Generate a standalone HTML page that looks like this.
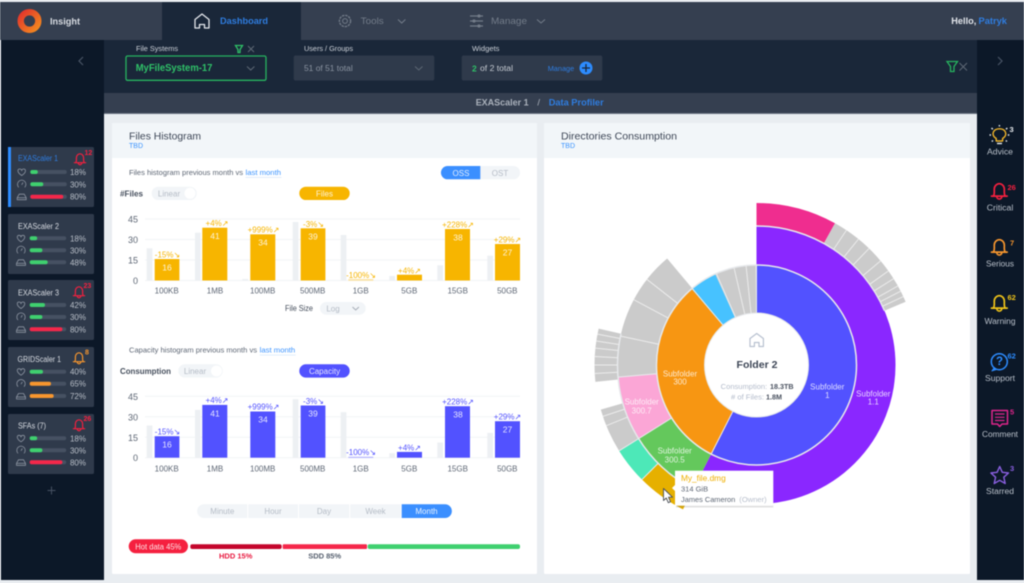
<!DOCTYPE html>
<html><head><meta charset="utf-8"><title>Insight Dashboard</title>
<style>
html,body{margin:0;padding:0;width:1024px;height:583px;overflow:hidden;background:#e9edf1}
svg{display:block;filter:blur(.55px)}
text{font-family:"Liberation Sans","DejaVu Sans",sans-serif;dominant-baseline:central;transform:translateY(.5px)}
.m{text-anchor:middle}.e{text-anchor:end}.b{font-weight:700}
.yl{font-size:9px;fill:#5d6674;text-anchor:end}
.xl{font-size:8px;fill:#5d6674;text-anchor:middle}
.gr{stroke:#f2f4f6;stroke-width:1}
.gb{fill:#edf0f3}
.v{font-size:8.5px;fill:#fff;fill-opacity:.85;text-anchor:middle}
.dy{font-size:8px;fill:#f7b500;text-anchor:middle}
.dp{font-size:8px;fill:#5252ff;text-anchor:middle}
.by{fill:#f7b500}.bp{fill:#5252ff}
.ct{font-size:8px;fill:#d8dce2}
.pc{font-size:8px;fill:#b9bfc8;text-anchor:end}
.tr{fill:#465162}.gn{fill:#3fd06f}.rd{fill:#f5274a}.or{fill:#f7962e}
.ri{fill:none;stroke:#8d95a2;stroke-width:.8}
.sl{font-size:8px;fill:#b9c0ca;text-anchor:middle}
.sf{font-size:8px;fill:#fff;fill-opacity:.8;text-anchor:middle}
.sep{stroke:#ececec;stroke-width:1}
.seg{font-size:8px;fill:#b5bcc6;text-anchor:middle}
</style></head>
<body>
<svg width="1024" height="583" viewBox="0 0 1024 583" xmlns="http://www.w3.org/2000/svg">
<defs>
<g id="bell" fill="none" stroke-width="1.5" stroke-linejoin="round" stroke-linecap="round">
<path d="M-5 4C-4.2 2.5-4.5 .5-4.5-1.5A4.5 5 0 0 1 4.5-1.5C4.5 .5 4.2 2.5 5 4"/>
<path d="M-7 4.6H7"/><path d="M-2.2 5A2.2 2.2 0 0 0 2.2 5"/></g>
<path id="heart" class="ri" d="M0 3.5C-5 .2-4.3-3-2-3-1-3-.2-2.2 0-1.6.2-2.2 1-3 2-3 4.3-3 5 .2 0 3.5Z"/>
<g id="gauge" class="ri"><path d="M-3 3A4.2 4.2 0 1 1 3 3"/><path d="M0 .5L1.3-1.8"/></g>
<g id="drive" class="ri"><path d="M-4.5 3H4.5V1L2.5-2.5H-2.5L-4.5 1Z"/><path d="M-4.5 1H4.5"/></g>
<path id="hs" d="M-7 7V-1.5L0-7 7-1.5V7H2.5V3.5H-2.5V7Z" fill="none" stroke-width="1.3" stroke-linejoin="round"/>
<linearGradient id="lg" x1="0" y1="0" x2="1" y2="1"><stop offset="0" stop-color="#e2352c"/><stop offset="1" stop-color="#f38a1f"/></linearGradient>
</defs>

<!-- shell -->
<rect width="1024" height="583" fill="#e9edf1"/>
<rect x="0" y="2" width="1024" height="38" fill="#353f50"/>
<rect x="162" y="2" width="139" height="38" fill="#1a2739"/>
<rect x="1" y="40" width="103" height="540" fill="#0c1828"/>
<rect x="104" y="40" width="873" height="53" fill="#1a2739"/>
<rect x="104" y="93" width="873" height="20" fill="#353f50"/>
<rect x="104" y="113" width="873" height="1" fill="#6b7482"/>
<rect x="977" y="40" width="47" height="540" fill="#0c1828"/>

<!-- top bar -->
<circle cx="29.5" cy="21" r="8.8" fill="none" stroke="url(#lg)" stroke-width="6.4"/>
<text x="50" y="21" font-size="9" class="b" fill="#d9dde3" textLength="30" lengthAdjust="spacingAndGlyphs">Insight</text>
<use href="#hs" x="202" y="21" stroke="#e4e7ec"/>
<text x="220" y="21" font-size="9.5" class="b" fill="#2f7de0" textLength="48" lengthAdjust="spacingAndGlyphs">Dashboard</text>
<g fill="none" stroke="#737c89" stroke-width="1"><circle cx="345" cy="21" r="2.4"/><circle cx="345" cy="21" r="5.6" stroke-width="1.3" stroke-dasharray="2.4 .9"/>
<path d="M398 19.5L401.7 23 405.4 19.5"/><path d="M537 19.5L541 23 545 19.5"/>
<path stroke-width="1.2" d="M470 16H483M470 21H483M470 26H483"/></g>
<g fill="#737c89"><circle cx="479" cy="16" r="1.6"/><circle cx="474" cy="21" r="1.6"/><circle cx="479" cy="26" r="1.6"/></g>
<text x="360.7" y="21" font-size="9.5" fill="#737c89" textLength="23" lengthAdjust="spacingAndGlyphs">Tools</text>
<text x="491" y="21" font-size="9.5" fill="#737c89" textLength="36" lengthAdjust="spacingAndGlyphs">Manage</text>
<text x="951.3" y="21" font-size="9.5" class="b" fill="#e4e7ec" textLength="25" lengthAdjust="spacingAndGlyphs">Hello,</text>
<text x="978.5" y="21" font-size="9.5" class="b" fill="#2f7de0" textLength="28.5" lengthAdjust="spacingAndGlyphs">Patryk</text>

<!-- filter bar -->
<path d="M83 57L79 61 83 65" fill="none" stroke="#4a5566" stroke-width="1.2"/>
<path d="M998 57L1002 61 998 65" fill="none" stroke="#4a5566" stroke-width="1.2"/>
<text x="136" y="49" font-size="7" fill="#ccd1d8" textLength="42" lengthAdjust="spacingAndGlyphs">File Systems</text>
<path d="M235.5 45.500H242.500L240 49.500V52.500H238V49.500Z" fill="none" stroke="#2fc168" stroke-width="1.300"/>
<path d="M248 46L254 52M254 46L248 52" stroke="#5e6875" stroke-width="1"/>
<rect x="126" y="56" width="140" height="24.300" rx="1.500" fill="#1a2739" stroke="#27b35f" stroke-width="1.300"/>
<text x="135.700" y="68" font-size="10" class="b" fill="#2fc168" textLength="76.700" lengthAdjust="spacingAndGlyphs">MyFileSystem-17</text>
<path d="M247 66.500L250.700 70 254.400 66.500" fill="none" stroke="#5e6875" stroke-width="1"/>
<text x="304" y="49" font-size="7" fill="#ccd1d8" textLength="49" lengthAdjust="spacingAndGlyphs">Users / Groups</text>
<rect x="293.700" y="55.500" width="140.600" height="25" rx="2" fill="#2f3a4b"/>
<text x="304" y="68" font-size="8" fill="#8a93a0" textLength="48.700" lengthAdjust="spacingAndGlyphs">51 of 51 total</text>
<path d="M415 66.500L418.800 70 422.500 66.500" fill="none" stroke="#5e6875" stroke-width="1"/>
<text x="472" y="49" font-size="7" fill="#ccd1d8" textLength="27.500" lengthAdjust="spacingAndGlyphs">Widgets</text>
<rect x="461.700" y="55.500" width="140.600" height="25" rx="2" fill="#2f3a4b"/>
<text x="472" y="68" font-size="8.500" class="b" fill="#2fc168">2</text>
<text x="480" y="68" font-size="8" fill="#c5cad1" textLength="33" lengthAdjust="spacingAndGlyphs">of 2 total</text>
<text x="547.700" y="68" font-size="7.500" fill="#2f7de0" textLength="26.500" lengthAdjust="spacingAndGlyphs">Manage</text>
<circle cx="586" cy="68" r="6.500" fill="#2d8cff"/>
<path d="M582 68H590M586 64V72" stroke="#1a2739" stroke-width="1.300"/>
<path d="M947 61.500H957.500L954 66.500V71.500H950.500V66.500Z" fill="none" stroke="#27b35f" stroke-width="1.300"/>
<path d="M959.500 63L967 70.500M967 63L959.500 70.500" stroke="#5e6875" stroke-width="1"/>

<!-- breadcrumb -->
<text x="475.700" y="102.500" font-size="9.500" class="b" fill="#aab1bb" textLength="53" lengthAdjust="spacingAndGlyphs">EXAScaler 1</text>
<text x="538.700" y="102.500" font-size="9.500" fill="#aab1bb" class="m">/</text>
<text x="548.700" y="102.500" font-size="9.500" class="b" fill="#2f7de0" textLength="55" lengthAdjust="spacingAndGlyphs">Data Profiler</text>

<!-- left sidebar cards -->
<rect x="8" y="147" width="86" height="60" rx="1.500" fill="#2f3a4b"/><rect x="8" y="147" width="3" height="60" fill="#2d8cff"/>
<rect x="8" y="214" width="86" height="60" rx="1.500" fill="#2f3a4b"/>
<rect x="8" y="280" width="86" height="60" rx="1.500" fill="#2f3a4b"/>
<rect x="8" y="347" width="86" height="60" rx="1.500" fill="#2f3a4b"/>
<rect x="8" y="414" width="86" height="60" rx="1.500" fill="#2f3a4b"/>

<text x="18" y="158" class="ct" style="fill:#2f7de0" textLength="40" lengthAdjust="spacingAndGlyphs">EXAScaler 1</text>
<use href="#bell" transform="translate(80 159) scale(.8)" stroke="#f5203f"/>
<text x="84.500" y="153" font-size="7" class="b" fill="#f5203f">12</text>
<use href="#heart" x="21.700" y="172"/><use href="#gauge" x="21.700" y="184.300"/><use href="#drive" x="21.700" y="196.700"/>
<rect x="30.300" y="170" width="36.500" height="4" rx="2" class="tr"/><rect x="30.300" y="170" width="7.500" height="4" rx="2" class="gn"/><text x="86" y="172" class="pc">18%</text>
<rect x="30.300" y="182.300" width="36.500" height="4" rx="2" class="tr"/><rect x="30.300" y="182.300" width="13" height="4" rx="2" class="gn"/><text x="86" y="184.300" class="pc">30%</text>
<rect x="30.300" y="194.700" width="36.500" height="4" rx="2" class="tr"/><rect x="30.300" y="194.700" width="33" height="4" rx="2" class="rd"/><text x="86" y="196.700" class="pc">80%</text>

<text x="18" y="226" class="ct" textLength="41" lengthAdjust="spacingAndGlyphs">EXAScaler 2</text>
<use href="#heart" x="21" y="238.300"/><use href="#gauge" x="21" y="250.300"/><use href="#drive" x="21" y="262.300"/>
<rect x="29.700" y="236.300" width="36.500" height="4" rx="2" class="tr"/><rect x="29.700" y="236.300" width="7.500" height="4" rx="2" class="gn"/><text x="86" y="238.300" class="pc">18%</text>
<rect x="29.700" y="248.300" width="36.500" height="4" rx="2" class="tr"/><rect x="29.700" y="248.300" width="12.700" height="4" rx="2" class="gn"/><text x="86" y="250.300" class="pc">30%</text>
<rect x="29.700" y="260.300" width="36.500" height="4" rx="2" class="tr"/><rect x="29.700" y="260.300" width="18" height="4" rx="2" class="gn"/><text x="86" y="262.300" class="pc">48%</text>

<text x="18" y="292.300" class="ct" textLength="41" lengthAdjust="spacingAndGlyphs">EXAScaler 3</text>
<use href="#bell" transform="translate(79 292) scale(.8)" stroke="#f5203f"/>
<text x="83.500" y="286" font-size="7" class="b" fill="#f5203f">23</text>
<use href="#heart" x="21" y="305"/><use href="#gauge" x="21" y="317"/><use href="#drive" x="21" y="329.300"/>
<rect x="29.700" y="303" width="36.500" height="4" rx="2" class="tr"/><rect x="29.700" y="303" width="15.300" height="4" rx="2" class="gn"/><text x="86" y="305" class="pc">42%</text>
<rect x="29.700" y="315" width="36.500" height="4" rx="2" class="tr"/><rect x="29.700" y="315" width="12.700" height="4" rx="2" class="gn"/><text x="86" y="317" class="pc">30%</text>
<rect x="29.700" y="327.300" width="36.500" height="4" rx="2" class="tr"/><rect x="29.700" y="327.300" width="32.700" height="4" rx="2" class="rd"/><text x="86" y="329.300" class="pc">80%</text>

<text x="17.500" y="359" class="ct" textLength="43.500" lengthAdjust="spacingAndGlyphs">GRIDScaler 1</text>
<use href="#bell" transform="translate(79 358) scale(.8)" stroke="#f7962e"/>
<text x="85" y="352.500" font-size="7" class="b" fill="#f7962e">8</text>
<use href="#heart" x="21" y="371.700"/><use href="#gauge" x="21" y="383.700"/><use href="#drive" x="21" y="396"/>
<rect x="29.700" y="369.700" width="36.500" height="4" rx="2" class="tr"/><rect x="29.700" y="369.700" width="13.300" height="4" rx="2" class="gn"/><text x="86" y="371.700" class="pc">40%</text>
<rect x="29.700" y="381.700" width="36.500" height="4" rx="2" class="tr"/><rect x="29.700" y="381.700" width="21.300" height="4" rx="2" class="or"/><text x="86" y="383.700" class="pc">65%</text>
<rect x="29.700" y="394" width="36.500" height="4" rx="2" class="tr"/><rect x="29.700" y="394" width="24" height="4" rx="2" class="or"/><text x="86" y="396" class="pc">72%</text>

<text x="18" y="425.700" class="ct" textLength="28" lengthAdjust="spacingAndGlyphs">SFAs (7)</text>
<use href="#bell" transform="translate(79 425) scale(.8)" stroke="#f5203f"/>
<text x="83.500" y="419" font-size="7" class="b" fill="#f5203f">26</text>
<use href="#heart" x="21" y="438.300"/><use href="#gauge" x="21" y="450.300"/><use href="#drive" x="21" y="462.300"/>
<rect x="29.700" y="436.300" width="36.500" height="4" rx="2" class="tr"/><rect x="29.700" y="436.300" width="7.500" height="4" rx="2" class="gn"/><text x="86" y="438.300" class="pc">18%</text>
<rect x="29.700" y="448.300" width="36.500" height="4" rx="2" class="tr"/><rect x="29.700" y="448.300" width="12.700" height="4" rx="2" class="gn"/><text x="86" y="450.300" class="pc">30%</text>
<rect x="29.700" y="460.300" width="36.500" height="4" rx="2" class="tr"/><rect x="29.700" y="460.300" width="32.700" height="4" rx="2" class="rd"/><text x="86" y="462.300" class="pc">80%</text>
<path d="M51.500 486.500V494.500M47.500 490.500H55.500" stroke="#465162" stroke-width="1"/>

<!-- panels -->
<rect x="112" y="123" width="425" height="451" rx="1.500" fill="#fff"/>
<rect x="112" y="123" width="425" height="35" fill="#f2f6f9"/>
<rect x="544" y="123" width="426" height="451" rx="1.500" fill="#fff"/>
<rect x="544" y="123" width="426" height="35" fill="#f2f6f9"/>
<text x="129" y="136" font-size="10.500" fill="#3d4656" textLength="72" lengthAdjust="spacingAndGlyphs">Files Histogram</text>
<text x="129" y="146" font-size="7" fill="#3b93ff">TBD</text>
<text x="561" y="136" font-size="10.500" fill="#3d4656" textLength="116" lengthAdjust="spacingAndGlyphs">Directories Consumption</text>
<text x="561" y="146" font-size="7" fill="#3b93ff">TBD</text>

<!-- files histogram -->
<text x="129" y="172" font-size="7.500" fill="#5d6674" textLength="114" lengthAdjust="spacingAndGlyphs">Files histogram previous month vs</text>
<text x="245.500" y="172" font-size="7.500" fill="#3b93ff" textLength="35.500" lengthAdjust="spacingAndGlyphs">last month</text>
<rect x="245.500" y="177" width="36" height=".7" fill="#d5e6fb"/>
<rect x="441" y="166" width="79" height="13.300" rx="6.600" fill="#f2f5f8"/>
<path d="M480.300 166H447.600A6.600 6.600 0 0 0 447.600 179.300H480.300Z" fill="#3b8fff"/>
<text x="461" y="172.800" font-size="8" fill="#fff" fill-opacity=".85" class="m">OSS</text>
<text x="500" y="172.800" font-size="8" fill="#b5bcc6" class="m">OST</text>
<text x="120" y="193.500" font-size="8" class="b" fill="#454e5c" textLength="23" lengthAdjust="spacingAndGlyphs">#Files</text>
<rect x="151.700" y="186.700" width="45" height="13.300" rx="6.600" fill="#f2f5f8"/><circle cx="190" cy="193.300" r="5.500" fill="#fff"/>
<text x="169" y="193.500" font-size="8" fill="#b5bcc6" class="m">Linear</text>
<rect x="299.300" y="186.700" width="50.400" height="13.300" rx="6.600" fill="#f7b500"/>
<text x="324.500" y="193.500" font-size="8" fill="#fff" fill-opacity=".85" class="m">Files</text>

<text x="138" y="219" class="yl">45</text><text x="138" y="239.500" class="yl">30</text><text x="138" y="260" class="yl">15</text><text x="138" y="280.500" class="yl">0</text>
<path class="gr" d="M145 219H520M145 239.500H520M145 260H520M145 280.500H520"/>
<rect class="gb" x="146.700" y="248.300" width="5.700" height="32.200"/><rect class="gb" x="195" y="232.700" width="5.700" height="47.800"/><rect class="gb" x="242.300" y="279" width="5.700" height="1.500"/><rect class="gb" x="292.700" y="222" width="5.700" height="58.500"/><rect class="gb" x="340.700" y="235" width="5.700" height="45.500"/><rect class="gb" x="389.300" y="276" width="5.700" height="4.500"/><rect class="gb" x="437.300" y="265.300" width="5.700" height="15.200"/><rect class="gb" x="487.300" y="255.700" width="5.700" height="24.800"/>
<rect class="by" x="154.700" y="259" width="24.700" height="21.500"/><rect class="by" x="202.300" y="227.700" width="25" height="52.800"/><rect class="by" x="250.300" y="234.300" width="25" height="46.200"/><rect class="by" x="300.700" y="228.300" width="24.700" height="52.200"/><rect x="348.300" y="279" width="25" height="1.800" fill="#fbe3a6"/><rect class="by" x="397" y="274.700" width="25" height="5.800"/><rect class="by" x="445" y="229" width="25" height="51.500"/><rect class="by" x="495" y="244" width="25" height="36.500"/>
<text class="v" x="167" y="267">16</text><text class="v" x="215" y="235.700">41</text><text class="v" x="263" y="242">34</text><text class="v" x="313" y="236">39</text><text class="v" x="458" y="237">38</text><text class="v" x="507.500" y="252">27</text>
<text class="dy" x="167.500" y="254.300">-15%↘</text><text class="dy" x="217" y="223">+4%↗</text><text class="dy" x="263.500" y="229.500">+999%↗</text><text class="dy" x="313.500" y="224">-3%↘</text><text class="dy" x="361" y="275">-100%↘</text><text class="dy" x="409.500" y="270.500">+4%↗</text><text class="dy" x="458" y="224.500">+228%↗</text><text class="dy" x="507.500" y="239.500">+29%↗</text>
<text class="xl" x="166.700" y="290.700">100KB</text><text class="xl" x="215" y="290.700">1MB</text><text class="xl" x="262.700" y="290.700">100MB</text><text class="xl" x="312.700" y="290.700">500MB</text><text class="xl" x="360.700" y="290.700">1GB</text><text class="xl" x="409.300" y="290.700">5GB</text><text class="xl" x="457.700" y="290.700">15GB</text><text class="xl" x="507.300" y="290.700">50GB</text>
<text x="299" y="308" font-size="8" class="m" fill="#454e5c" textLength="28" lengthAdjust="spacingAndGlyphs">File Size</text>
<rect x="320" y="302" width="45.700" height="12.700" rx="6.300" fill="#f2f5f8"/>
<text x="333" y="308.500" font-size="8" fill="#b5bcc6" class="m">Log</text>
<path d="M352.500 307L355.700 310 358.900 307" fill="none" stroke="#a5acb6" stroke-width="1"/>

<!-- capacity histogram -->
<text x="129" y="349.700" font-size="7.500" fill="#5d6674" textLength="128" lengthAdjust="spacingAndGlyphs">Capacity histogram previous month vs</text>
<text x="259.700" y="349.700" font-size="7.500" fill="#3b93ff" textLength="35.500" lengthAdjust="spacingAndGlyphs">last month</text>
<rect x="259.700" y="354.700" width="36" height=".7" fill="#d5e6fb"/>
<text x="120" y="371" font-size="8" class="b" fill="#454e5c" textLength="51" lengthAdjust="spacingAndGlyphs">Consumption</text>
<rect x="178.300" y="364.300" width="44.400" height="13.300" rx="6.600" fill="#f2f5f8"/><circle cx="216.500" cy="371" r="5.500" fill="#fff"/>
<text x="195" y="371" font-size="8" fill="#b5bcc6" class="m">Linear</text>
<rect x="299.300" y="364.300" width="50.400" height="13.300" rx="6.600" fill="#5252ff"/>
<text x="324.500" y="371" font-size="8" fill="#fff" fill-opacity=".85" class="m">Capacity</text>

<text x="138" y="396.300" class="yl">45</text><text x="138" y="416.800" class="yl">30</text><text x="138" y="437.300" class="yl">15</text><text x="138" y="457.700" class="yl">0</text>
<path class="gr" d="M145 396.300H520M145 416.800H520M145 437.300H520M145 457.700H520"/>
<rect class="gb" x="146.700" y="425.500" width="5.700" height="32.200"/><rect class="gb" x="195" y="409.900" width="5.700" height="47.800"/><rect class="gb" x="292.700" y="399.200" width="5.700" height="58.500"/><rect class="gb" x="340.700" y="412.200" width="5.700" height="45.500"/><rect class="gb" x="389.300" y="453.200" width="5.700" height="4.500"/><rect class="gb" x="437.300" y="442.500" width="5.700" height="15.200"/><rect class="gb" x="487.300" y="432.900" width="5.700" height="24.800"/>
<rect class="bp" x="154.700" y="436.200" width="24.700" height="21.500"/><rect class="bp" x="202.300" y="404.900" width="25" height="52.800"/><rect class="bp" x="250.300" y="411.500" width="25" height="46.200"/><rect class="bp" x="300.700" y="405.500" width="24.700" height="52.200"/><rect x="348.300" y="456.700" width="25" height="1.300" fill="#b9b9ff"/><rect class="bp" x="397" y="451.900" width="25" height="5.800"/><rect class="bp" x="445" y="406.200" width="25" height="51.500"/><rect class="bp" x="495" y="421.200" width="25" height="36.500"/>
<text class="v" x="167" y="444.200">16</text><text class="v" x="215" y="412.900">41</text><text class="v" x="263" y="419.200">34</text><text class="v" x="313" y="413.200">39</text><text class="v" x="458" y="414.200">38</text><text class="v" x="507.500" y="429.200">27</text>
<text class="dp" x="167.500" y="431.500">-15%↘</text><text class="dp" x="217" y="400.200">+4%↗</text><text class="dp" x="263.500" y="406.700">+999%↗</text><text class="dp" x="313.500" y="401.200">-3%↘</text><text class="dp" x="361" y="452.200">-100%↘</text><text class="dp" x="409.500" y="447.700">+4%↗</text><text class="dp" x="458" y="401.700">+228%↗</text><text class="dp" x="507.500" y="416.700">+29%↗</text>
<text class="xl" x="166.700" y="468.300">100KB</text><text class="xl" x="215" y="468.300">1MB</text><text class="xl" x="262.700" y="468.300">100MB</text><text class="xl" x="312.700" y="468.300">500MB</text><text class="xl" x="360.700" y="468.300">1GB</text><text class="xl" x="409.300" y="468.300">5GB</text><text class="xl" x="457.700" y="468.300">15GB</text><text class="xl" x="507.300" y="468.300">50GB</text>

<!-- segmented time -->
<path d="M247.300 504.300H204A6.800 6.800 0 0 0 204 518H247.300Z" fill="#f2f5f8"/>
<rect x="248.300" y="504.300" width="49.700" height="13.700" fill="#f2f5f8"/><rect x="299" y="504.300" width="50.300" height="13.700" fill="#f2f5f8"/><rect x="350.300" y="504.300" width="50.400" height="13.700" fill="#f2f5f8"/>
<path d="M401.700 504.300H445A6.800 6.800 0 0 1 445 518H401.700Z" fill="#3b8fff"/>
<text class="seg" x="222.300" y="511">Minute</text><text class="seg" x="273" y="511">Hour</text><text class="seg" x="324" y="511">Day</text><text class="seg" x="375.500" y="511">Week</text><text class="seg" style="fill:#fff;fill-opacity:.9" x="426.500" y="511">Month</text>

<!-- hot data -->
<rect x="128.700" y="539.300" width="59.300" height="14" rx="7" fill="#f5203f"/>
<text x="158.300" y="546.300" font-size="7.800" fill="#fff" fill-opacity=".88" class="m" textLength="46" lengthAdjust="spacingAndGlyphs">Hot data 45%</text>
<rect x="190.300" y="544.300" width="91.400" height="4.700" rx="2" fill="#c4062c"/>
<rect x="282.700" y="544.300" width="84.300" height="4.700" rx="1" fill="#f5274a"/>
<rect x="367.700" y="544.300" width="152.300" height="4.700" rx="2" fill="#3fd06f"/>
<text x="235.700" y="555.700" font-size="7.500" class="m b" fill="#e8193f">HDD 15%</text>
<text x="324.700" y="555.700" font-size="7.500" class="m b" fill="#555f6e">SDD 85%</text>

<!-- sunburst -->
<g transform="translate(756.500 365) rotate(-90)" fill="none">
<!-- outer ring -->
<g stroke-width="23">
<circle r="150.500" pathLength="360" stroke="#ef2d8f" stroke-dasharray="29 360"/>
<circle r="150.500" pathLength="360" stroke="#cbcbcb" stroke-dasharray="38 360" stroke-dashoffset="-29"/>
<circle r="150.500" pathLength="360" stroke="#cbcbcb" stroke-dasharray="19 360" stroke-dashoffset="-264"/>
<circle r="150.500" pathLength="360" stroke="#cbcbcb" stroke-dasharray="16 360" stroke-dashoffset="-238"/>
<circle r="150.500" pathLength="360" stroke="#4de8b8" stroke-dasharray="13 360" stroke-dashoffset="-225"/>
<circle r="150.500" pathLength="360" stroke="#e6b000" stroke-dasharray="18 360" stroke-dashoffset="-207"/>
</g>
<!-- middle ring -->
<g stroke-width="39">
<circle r="119.500" pathLength="360" stroke="#8a27ff" stroke-dasharray="207 360"/>
<circle r="119.500" pathLength="360" stroke="#64c85c" stroke-dasharray="31 360" stroke-dashoffset="-207"/>
<circle r="119.500" pathLength="360" stroke="#fba6d6" stroke-dasharray="27 360" stroke-dashoffset="-238"/>
<circle r="119.500" pathLength="360" stroke="#cbcbcb" stroke-dasharray="55 360" stroke-dashoffset="-265"/>
</g>
<!-- inner ring -->
<g stroke-width="48">
<circle r="76" pathLength="360" stroke="#5252ff" stroke-dasharray="207 360"/>
<circle r="76" pathLength="360" stroke="#f79612" stroke-dasharray="113 360" stroke-dashoffset="-207"/>
<circle r="76" pathLength="360" stroke="#47c2ff" stroke-dasharray="16 360" stroke-dashoffset="-320"/>
<circle r="76" pathLength="360" stroke="#cbcbcb" stroke-dasharray="24 360" stroke-dashoffset="-336"/>
</g>
<circle r="100" stroke="#e6e8eb" stroke-width="1.500"/>
<circle r="139" pathLength="360" stroke="#e6e8eb" stroke-width="1.500" stroke-dasharray="67 140 76 77"/>
</g>
<g transform="translate(756.500 365)">
<g class="sep">
<path transform="rotate(33.700)" d="M0-139V-162"/><path transform="rotate(39)" d="M0-139V-162"/><path transform="rotate(44)" d="M0-139V-162"/><path transform="rotate(50)" d="M0-139V-162"/><path transform="rotate(54.500)" d="M0-139V-162"/><path transform="rotate(57.800)" d="M0-139V-162"/><path transform="rotate(60.800)" d="M0-139V-162"/><path transform="rotate(62.900)" d="M0-139V-162"/><path transform="rotate(65)" d="M0-139V-162"/>
<path transform="rotate(281)" d="M0-139V-162"/><path transform="rotate(278.500)" d="M0-139V-162"/><path transform="rotate(276)" d="M0-139V-162"/><path transform="rotate(273)" d="M0-139V-162"/><path transform="rotate(270)" d="M0-139V-162"/><path transform="rotate(267)" d="M0-139V-162"/>
<path transform="rotate(251.500)" d="M0-139V-162"/><path transform="rotate(248)" d="M0-139V-162"/>
<path transform="rotate(282)" d="M0-100V-139"/><path transform="rotate(298)" d="M0-100V-139"/><path transform="rotate(308)" d="M0-100V-139"/>
<path transform="rotate(347)" d="M0-52V-100"/><path transform="rotate(354)" d="M0-52V-100"/>
</g>
<g stroke="#e9ebee" stroke-width="1">
<path transform="rotate(207)" d="M0-52V-100"/><path transform="rotate(320)" d="M0-52V-100"/><path transform="rotate(336.300)" d="M0-52V-100"/><path transform="rotate(238)" d="M0-100V-162"/><path transform="rotate(225)" d="M0-139V-162"/><path transform="rotate(265)" d="M0-100V-139"/><path d="M0-52V-100"/>
</g>
<circle r="52" fill="#fff" stroke="#e6e8eb" stroke-width="1"/>
</g>
<path d="M750 346.500V338.500L756.700 333.500 763.400 338.500V346.500H759V342.500H754.400V346.500Z" fill="none" stroke="#b8c1d0" stroke-width="1.200" stroke-linejoin="round"/>
<text x="757" y="364.300" font-size="10.500" class="m b" fill="#3d4656" textLength="41" lengthAdjust="spacingAndGlyphs">Folder 2</text>
<text x="720.700" y="386" font-size="7.500" fill="#b4bccb" textLength="46.500" lengthAdjust="spacingAndGlyphs">Consumption:</text>
<text x="770" y="386" font-size="7.500" class="b" fill="#4a5260" textLength="23.500" lengthAdjust="spacingAndGlyphs">18.3TB</text>
<text x="731" y="396.700" font-size="7.500" fill="#b4bccb" textLength="33" lengthAdjust="spacingAndGlyphs"># of Files:</text>
<text x="766" y="396.700" font-size="7.500" class="b" fill="#4a5260" textLength="16" lengthAdjust="spacingAndGlyphs">1.8M</text>
<text class="sf" x="680" y="373.300">Subfolder</text><text class="sf" x="680" y="381.700">300</text>
<text class="sf" x="827.300" y="386.700">Subfolder</text><text class="sf" x="827.300" y="395">1</text>
<text class="sf" x="873.300" y="393.300">Subfolder</text><text class="sf" x="873.300" y="401.300">1.1</text>
<text class="sf" x="641.700" y="401.700">Subfolder</text><text class="sf" x="641.700" y="410.300">300.7</text>
<text class="sf" x="674.700" y="450.700">Subfolder</text><text class="sf" x="674.700" y="459.300">300.5</text>

<!-- tooltip -->
<rect x="676" y="472.500" width="97.300" height="35" fill="#5a5a5a" opacity=".18"/>
<rect x="675" y="470.700" width="98.300" height="35" fill="#fff"/>
<path d="M675 485L672 488 675 491Z" fill="#fff"/>
<text x="681" y="477.700" font-size="8.500" fill="#f0b000" textLength="44.700" lengthAdjust="spacingAndGlyphs">My_file.dmg</text>
<text x="681" y="488.700" font-size="7.500" fill="#5d6674">314 GiB</text>
<text x="681" y="499" font-size="7.500" fill="#5d6674" textLength="54.300" lengthAdjust="spacingAndGlyphs">James Cameron</text>
<text x="739.300" y="499" font-size="7.500" fill="#b8bfcc" textLength="27.400" lengthAdjust="spacingAndGlyphs">(Owner)</text>
<path d="M663.500 488.500V500.500L666.300 498 668.300 502.700 670.500 501.700 668.500 497.200H672.500Z" fill="#fff" stroke="#4a4f57" stroke-width=".9" stroke-linejoin="round"/>

<!-- right sidebar -->
<g fill="none" stroke="#f0b429" stroke-width="1.400" stroke-linejoin="round">
<path d="M996.200 141V138.500C993 136.500 992.500 133.800 993.500 131.800 995.500 127.800 1003.500 127.800 1005.300 131.800 1006.300 133.800 1005.800 136.500 1002.600 138.500V141Z"/>
<path d="M997 143.500H1002" stroke="#e8ebef"/>
<path stroke="#e8ebef" d="M999.400 125V126.500M991.500 128L992.800 129.300M1007.300 128L1006 129.300M989.500 135H991M1009.300 135H1007.800M991.800 141.500L993 140.500M1007 141.500L1005.800 140.500"/>
</g>
<text x="1009.500" y="129" font-size="7.500" class="b" fill="#e8ebef">3</text>
<text x="1000" y="151.700" class="sl" textLength="26" lengthAdjust="spacingAndGlyphs">Advice</text>

<use href="#bell" transform="translate(999.300 191) scale(1.120)" stroke="#f5203f"/>
<text x="1007.500" y="187" font-size="7.500" class="b" fill="#f5203f">26</text>
<text x="1000" y="207.700" class="sl" textLength="26.500" lengthAdjust="spacingAndGlyphs">Critical</text>

<use href="#bell" transform="translate(999.300 247) scale(1.120)" stroke="#f7962e"/>
<text x="1010" y="242.500" font-size="7.500" class="b" fill="#f7962e">7</text>
<text x="1000" y="263.700" class="sl" textLength="28" lengthAdjust="spacingAndGlyphs">Serious</text>

<use href="#bell" transform="translate(999.300 303) scale(1.120)" stroke="#f0c419"/>
<text x="1007.500" y="297" font-size="7.500" class="b" fill="#f0c419">62</text>
<text x="1000" y="321" class="sl" textLength="31" lengthAdjust="spacingAndGlyphs">Warning</text>

<circle cx="999.300" cy="361.700" r="8" fill="none" stroke="#2d8cff" stroke-width="1.500"/>
<path d="M994.300 367.500L991.800 371 996.800 369.500Z" fill="#2d8cff" stroke="#2d8cff" stroke-width=".8" stroke-linejoin="round"/>
<text x="999.500" y="361.700" font-size="11.500" class="m b" fill="#2d8cff">?</text>
<text x="1007.500" y="355.500" font-size="7.500" class="b" fill="#2d8cff">62</text>
<text x="1000" y="378" class="sl" textLength="30" lengthAdjust="spacingAndGlyphs">Support</text>

<path d="M992 410.500H1007.500V424H1002L999.700 426.500 997.500 424H992Z" fill="none" stroke="#e0258c" stroke-width="1.500" stroke-linejoin="round"/>
<path d="M995 414H1004.500M995 417.300H1004.500M995 420.500H1004.500" stroke="#e0258c" stroke-width="1.200"/>
<text x="1010" y="411.500" font-size="7.500" class="b" fill="#e0258c">5</text>
<text x="1000" y="434" class="sl" textLength="36" lengthAdjust="spacingAndGlyphs">Comment</text>

<path d="M999.700 466.500L1002.300 472.300 1008.500 473 1003.800 477.200 1005.200 483.500 999.700 480.300 994.200 483.500 995.600 477.200 990.900 473 997.100 472.300Z" fill="none" stroke="#8a5fe0" stroke-width="1.400" stroke-linejoin="round"/>
<text x="1010" y="468" font-size="7.500" class="b" fill="#8a5fe0">3</text>
<text x="1000" y="491" class="sl" textLength="28" lengthAdjust="spacingAndGlyphs">Starred</text>
</svg>
</body></html>
